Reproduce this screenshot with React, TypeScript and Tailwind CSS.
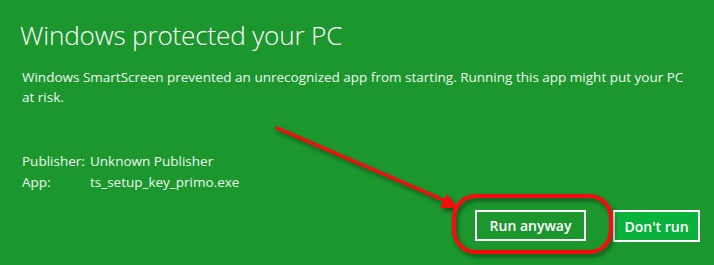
import React from "react";

export default function App() {
  return (
    <div className="relative w-[714px] h-[265px] bg-[#1b972e] text-white overflow-hidden" style={{ fontFamily: '"Open Sans", "Noto Sans", sans-serif' }}>
      <div className="flex flex-col pl-[20px] pt-[18px]">
        <h1 className="text-[26.2px] leading-[34px] font-light tracking-[-0.2px]">Windows protected your PC</h1>
        <p className="mt-[15px] ml-[2px] w-[670px] text-[13.5px] leading-[20px] font-normal text-[#eef7ef]">
          Windows SmartScreen prevented an unrecognized app from starting. Running this app might put your PC at risk.
        </p>
        <div className="mt-[44px] ml-[2px] grid grid-cols-[68px_1fr] text-[13.5px] leading-[21px] text-[#eef7ef]">
          <span>Publisher:</span>
          <span>Unknown Publisher</span>
          <span>App:</span>
          <span>ts_setup_key_primo.exe</span>
        </div>
      </div>
      <div className="absolute left-[475px] top-[210px] flex gap-[27px]">
        <button className="w-[111px] h-[31px] border-2 border-white bg-[#1b972e] text-[14px] font-semibold text-white flex items-center justify-center">Run anyway</button>
        <button className="w-[87px] h-[32px] border-2 border-white bg-[#0bb13d] text-[14px] font-semibold text-white flex items-center justify-center">Don't run</button>
      </div>
      <svg className="absolute left-0 top-0 pointer-events-none" width="714" height="265">
        <defs>
          <filter id="sh" x="-20%" y="-20%" width="140%" height="140%">
            <feDropShadow dx="2" dy="3" stdDeviation="2" floodColor="#000" floodOpacity="0.45" />
          </filter>
        </defs>
        <g filter="url(#sh)">
          <line x1="277" y1="128" x2="446" y2="201" stroke="#f50a0a" strokeWidth="3.5" strokeLinecap="round" />
          <polygon points="458,208 440,208 447,194" fill="#f50a0a" />
          <rect x="454" y="196" width="157" height="56" rx="22" ry="22" fill="none" stroke="#f50a0a" strokeWidth="4" />
        </g>
      </svg>
    </div>
  );
}
